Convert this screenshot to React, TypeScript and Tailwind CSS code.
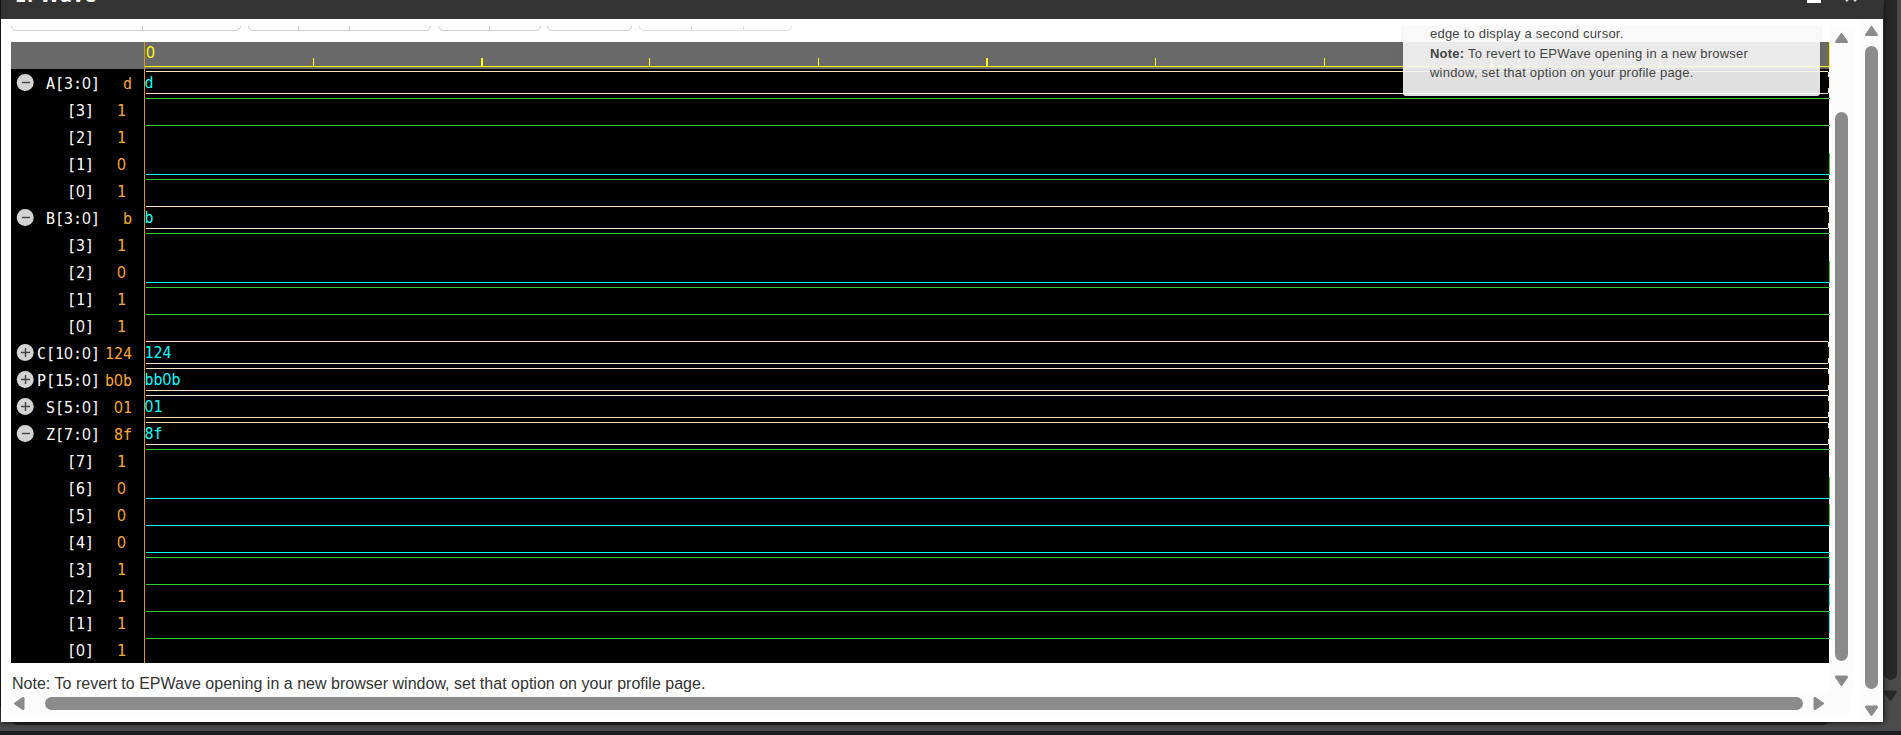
type Signal = { label: string; value: string; kind: 'bus' | 'bit'; open?: boolean; edge?: 'up' | 'down' };

const bit = (n: number, value: string, edge?: 'up' | 'down'): Signal => ({ label: `[${n}]`, value, kind: 'bit', edge });

const signals: (Signal & { wave?: string })[] = [
  { label: 'A[3:0]', value: 'd', wave: 'd', kind: 'bus', open: true },
  bit(3, '1'), bit(2, '1'), bit(1, '0', 'up'), bit(0, '1'),
  { label: 'B[3:0]', value: 'b', wave: 'b', kind: 'bus', open: true },
  bit(3, '1'), bit(2, '0', 'up'), bit(1, '1'), bit(0, '1'),
  { label: 'C[10:0]', value: '124', wave: '124', kind: 'bus' },
  { label: 'P[15:0]', value: 'b0b', wave: 'bb0b', kind: 'bus' },
  { label: 'S[5:0]', value: '01', wave: '01', kind: 'bus' },
  { label: 'Z[7:0]', value: '8f', wave: '8f', kind: 'bus', open: true },
  bit(7, '1'), bit(6, '0', 'up'), bit(5, '0', 'up'), bit(4, '0'),
  bit(3, '1', 'down'), bit(2, '1', 'down'), bit(1, '1', 'down'), bit(0, '1'),
];

function Mono({ text }: { text: string }) {
  return (
    <span className="inline-flex h-[18px] items-start align-top leading-[18px]">
      {text.split('').map((c, i) => (
        <span
          key={i}
          className={
            c === '0'
              ? "flex w-[9px] justify-center font-['Noto_Sans',sans-serif] text-[15.5px] leading-[17px]"
              : 'flex w-[9px] justify-center'
          }
        >
          {c}
        </span>
      ))}
    </span>
  );
}

function Toggle({ open }: { open?: boolean }) {
  return (
    <svg width="18" height="18" viewBox="0 0 18 18" className="block shrink-0">
      <circle cx="9.2" cy="9.4" r="8.5" fill="#d3d3d3" />
      <path d={open ? 'M6 9.5H14' : 'M5 9.5H14M9.5 5V14'} stroke="#444" strokeWidth="1.4" />
    </svg>
  );
}

function Wave({ s }: { s: Signal }) {
  return (
    <svg width="1686" height="27" className="block" shapeRendering="crispEdges">
      {s.kind === 'bus' ? (
        <>
          <path d="M2 2.5H1684M2 24.5H1684" stroke="#ffe4c4" />
          <path d="M1684.5 3V8M1685.5 7V20M1684.5 19V24" stroke="#ffe4c4" />
        </>
      ) : (
        <>
          <path d={s.value === '1' ? 'M2 2.5H1686' : 'M2 24.5H1686'} stroke={s.value === '1' ? '#32cd32' : '#00ffff'} />
          {s.edge === 'up' && <path d="M1685.5 3V24" stroke="#32cd32" />}
          {s.edge === 'down' && <path d="M1685.5 3V24" stroke="#00ffff" />}
        </>
      )}
    </svg>
  );
}

function Group({ cells, faded, gap }: { cells: string[]; faded?: boolean; gap: string }) {
  return (
    <div className={`flex h-[31px] rounded-[5px] border border-[#ccc] ${gap} ${faded ? 'opacity-60' : ''}`}>
      {cells.map((w, i) => (
        <div key={i} className={`${w} ${i < cells.length - 1 ? 'border-r border-[#ccc]' : ''}`} />
      ))}
    </div>
  );
}

function Arrow({ dir, color = '#8b8b8b' }: { dir: 'up' | 'down' | 'left' | 'right'; color?: string }) {
  const vertical = dir === 'up' || dir === 'down';
  const paths = {
    up: 'M7.5 1L13.5 9.5Q14 10.5 13 10.5H2Q1 10.5 1.5 9.5Z',
    down: 'M7.5 11L13.5 2.5Q14 1 13 1H2Q1 1 1.5 2.5Z',
    left: 'M1 7.5L9.5 1.5Q11 1 11 2V13Q11 14 9.5 13.5Z',
    right: 'M11 7.5L2.5 1.5Q1 1 1 2V13Q1 14 2.5 13.5Z',
  };
  return (
    <svg width={vertical ? 15 : 12} height={vertical ? 12 : 15} className="block shrink-0">
      <path d={paths[dir]} fill={color} stroke={color} strokeLinejoin="round" />
    </svg>
  );
}

const ticks = ['M169.5 16V24', 'M338 16V24', 'M505.5 16V24', 'M674.5 16V24', 'M843 16V24', 'M1011.5 16V24', 'M1180.5 16V24', 'M1348 16V24', 'M1516.5 16V24'];

export default function App() {
  return (
    <div className="relative flex h-[735px] w-[1901px] flex-col overflow-hidden bg-[#4b4b4b] font-['Liberation_Sans',Arial,sans-serif]">
      {/* Page scrollbars behind the dialog */}
      <div className="absolute top-0 right-[4px] flex h-[722px] w-[14px] flex-col items-center">
        <div className="h-[680px] w-[13px] rounded-b-full bg-[#282828]" />
        <div className="mt-[10px]"><Arrow dir="down" color="#282828" /></div>
      </div>
      <div className="absolute top-[712px] left-[11px] h-[13px] w-[1819px] rounded-full bg-[#282828]" />
      <div className="absolute top-[731px] left-0 h-[4px] w-full bg-[#1c1c1e]" />
      <div className="absolute top-0 left-0 h-[706px] w-px bg-[#20222b]" />

      <div className="relative ml-px flex h-[722px] w-[1882px] flex-col bg-white shadow-[0_0_6px_#000]">
        <header className="flex h-[19px] shrink-0 justify-between overflow-hidden bg-[#333] text-white">
          <h1 className="-mt-[17px] ml-[14px] h-[24px] font-['Open_Sans',sans-serif] text-[20px] leading-[24px] font-bold tracking-[0.6px]">EPWave</h1>
          <div className="flex gap-[23px] pr-[25px]">
            <span className="h-[3px] w-[14px] bg-white" />
            <svg width="14" height="3"><path d="M2 1L4 -1M12 1L10 -1" stroke="#ddd" strokeWidth="2.5" /></svg>
          </div>
        </header>

        <div className="flex min-h-0 grow">
          <div className="ml-[10px] flex w-[1842px] flex-col pt-[7px]">
            <div className="flex h-[666px]">
              <main className="relative w-[1819px] overflow-hidden">
                <div className="flex h-[16px] items-end overflow-hidden pb-[11px]">
                  <Group gap="mr-[7px]" cells={['w-[131px]', 'w-[97px]']} />
                  <Group gap="mr-[7px]" cells={['w-[50px]', 'w-[51px]', 'w-[80px]']} />
                  <Group gap="mr-[6px]" cells={['w-[51px]', 'w-[50px]']} />
                  <Group gap="mr-[7px]" cells={['w-[83px]']} />
                  <Group gap="mr-0" faded cells={['w-[52px]', 'w-[52px]', 'w-[47px]']} />
                </div>

                <div className="relative h-[621px] w-[1818px] bg-black font-['DejaVu_Sans_Mono',monospace] text-[15px]">
                  <div className="flex h-[27px] bg-[#696969]">
                    <div className="relative ml-[133px] h-[27px] w-[1686px] shrink-0">
                      <svg width="1686" height="27" className="absolute inset-0" shapeRendering="crispEdges">
                        <path d="M1 24.5H1686M1685.5 0V24" stroke="#ff0" />
                        {ticks.map((d, i) => (
                          <path key={i} d={d} stroke="#ff0" strokeWidth={i === 1 || i === 4 || i === 7 ? 2 : 1} />
                        ))}
                      </svg>
                      <span className="relative ml-[2px] block pt-[2px] text-[#ff0]"><Mono text="0" /></span>
                    </div>
                  </div>
                  {signals.map((s, i) => (
                    <div key={i} className="flex h-[27px] w-[1819px]">
                      <div className="flex w-[24px] justify-end pt-[4px] pr-px">{s.kind === 'bus' && <Toggle open={s.open} />}</div>
                      <div className={`flex w-[65px] justify-end pt-[6px] text-white ${s.kind === 'bit' ? 'pr-[6px]' : ''}`}>
                        <Mono text={s.label} />
                      </div>
                      <div className={`flex w-[44px] justify-end pt-[6px] text-[#ffa82e] ${s.kind === 'bit' ? 'pr-[18px]' : 'pr-[12px]'}`}>
                        <Mono text={s.value} />
                      </div>
                      <div className="relative">
                        <Wave s={s} />
                        <span className="absolute top-[5px] left-[0.5px] text-[#0ff]">
                          <Mono text={s.wave ?? ''} />
                        </span>
                      </div>
                    </div>
                  ))}
                  <div className="absolute top-0 left-[133px] h-full w-px bg-[#dc9620]" />
                </div>

                <p className="mt-[11px] h-[20px] pl-px text-[16px] leading-[20px] tracking-[0.015px] whitespace-nowrap text-[#333]">
                  Note: To revert to EPWave opening in a new browser window, set that option on your profile page.
                </p>

                <aside className="absolute top-0 left-[1392px] h-[70px] w-[417px] rounded-b-[3px] bg-[#f8f8f8]/90 pl-[27px] text-[13px] leading-[19.5px] tracking-[0.22px] text-[#444] shadow-[0_0_4px_rgba(0,0,0,0.1)]">
                  <p className="-mt-[2px]">edge to display a second cursor.</p>
                  <p><b>Note:</b> To revert to EPWave opening in a new browser</p>
                  <p>window, set that option on your profile page.</p>
                </aside>
              </main>

              <div className="flex w-[23px] flex-col items-center bg-[#fcfcfc] pt-[6px]">
                <Arrow dir="up" />
                <div className="mt-[68px] h-[549px] w-[13px] shrink-0 rounded-full bg-[#8b8b8b]" />
                <div className="mt-[14px]"><Arrow dir="down" /></div>
              </div>
            </div>
            <div className="-ml-[3px] flex h-[23px] w-[1842px] shrink-0 items-center bg-[#fcfcfc] pl-[5px]">
              <Arrow dir="left" />
              <div className="ml-[20px] h-[13px] w-[1758px] rounded-full bg-[#8b8b8b]" />
              <div className="ml-[10px]"><Arrow dir="right" /></div>
            </div>
          </div>
          <div className="ml-auto flex w-[23px] flex-col items-center bg-[#fcfcfc] pt-[6px]">
            <Arrow dir="up" />
            <div className="mt-[9px] h-[643px] w-[13px] shrink-0 rounded-full bg-[#8b8b8b]" />
            <div className="mt-[16px]"><Arrow dir="down" /></div>
          </div>
        </div>
      </div>
    </div>
  );
}
